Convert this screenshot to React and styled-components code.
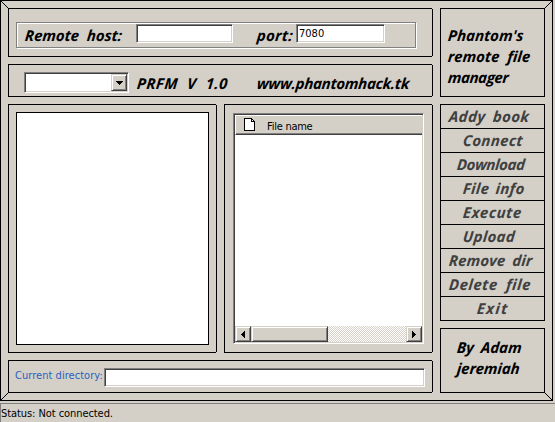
import React from 'react';
import styled, { createGlobalStyle, css } from 'styled-components';

const Global = createGlobalStyle`
  *, *::before, *::after { box-sizing: border-box; }
  body { margin: 0; background: #d4d0c8; overflow: hidden; }
`;

const sunken = css`
  border: 1px solid;
  border-color: #808080 #fff #fff #808080;
  box-shadow: inset 1px 1px #404040, inset -1px -1px #d4d0c8;
  background: #fff;
`;

const raised = css`
  border: 1px solid;
  border-color: #d4d0c8 #404040 #404040 #d4d0c8;
  box-shadow: inset 1px 1px #fff, inset -1px -1px #808080;
  background: #d4d0c8;
`;

const ui = css`
  font-family: Tahoma, 'DejaVu Sans Condensed', 'DejaVu Sans', sans-serif;
  font-stretch: condensed;
  font-size: 11px;
  line-height: 14px;
  white-space: pre;
`;

const Window = styled.div`
  width: 555px;
  height: 422px;
  display: flex;
  flex-direction: column;
  background: #d4d0c8;
`;

const Frame = styled.main`
  position: relative;
  width: 553px;
  height: 401px;
  border: 1px solid #000;
  padding: 7px;
  display: flex;
  gap: 7px;
`;

const Corners = styled.svg`
  position: absolute;
  left: -1px;
  top: -1px;
  pointer-events: none;
`;

const Left = styled.div`
  width: 425px;
  display: flex;
  flex-direction: column;
  gap: 7px;
`;

const Right = styled.aside`
  width: 105px;
  display: flex;
  flex-direction: column;
  gap: 7px;
`;

const notch = css`
  position: relative;
  &::before, &::after {
    content: '';
    position: absolute;
    right: -1px;
    width: 1px;
    height: 1px;
    background: #d4d0c8;
  }
  &::before { top: -1px; }
  &::after { bottom: -1px; }
`;

const Panel = styled.section`
  flex: none;
  width: ${(p) => (p.$w ? `${p.$w}px` : 'auto')};
  height: ${(p) => p.$h}px;
  padding: ${(p) => p.$pad || '7px'};
  border: 1px solid #000;
  ${(p) => p.$notch && notch}
`;

const Row = styled(Panel)`
  display: flex;
  align-items: flex-start;
`;

const Split = styled.div`
  display: flex;
  gap: 7px;
`;

const Etched = styled.div`
  width: 400px;
  height: 26px;
  border: 1px solid #808080;
  box-shadow: inset 1px 1px #fff, 1px 1px #fff;
  padding: 1px 0 0 8px;
  display: flex;
`;

const Script = styled.span`
  display: block;
  flex: none;
  width: ${(p) => (p.$w ? `${p.$w}px` : 'auto')};
  margin-top: ${(p) => p.$top || 0}px;
  margin-left: ${(p) => p.$x || 0}px;
  font: italic 700 15px/21px 'Comic Sans MS', 'Open Sans', sans-serif;
  letter-spacing: ${(p) => p.$ls || 0}px;
  word-spacing: ${(p) => p.$ws || 0}px;
  white-space: nowrap;
  color: ${(p) => p.$color || '#000'};
  transform: skewX(-5deg);
`;

const Field = styled.div`
  ${sunken}
  ${ui}
  flex: none;
  width: ${(p) => p.$w}px;
  height: 19px;
  padding: 2px 2px 0;
`;

const Combo = styled.div`
  ${sunken}
  width: 105px;
  height: 21px;
  padding: 1px;
  display: flex;
  justify-content: flex-end;
`;

const Button3D = styled.button`
  ${raised}
  width: ${(p) => p.$w || 16}px;
  height: ${(p) => p.$h || 16}px;
  padding: 0;
  display: flex;
  align-items: center;
  justify-content: center;
`;

const Tree = styled.div`
  width: 193px;
  height: 233px;
  border: 1px solid #000;
  background: #fff;
`;

const FileList = styled.div`
  ${sunken}
  width: 191px;
  height: 231px;
  padding: 1px;
  display: flex;
  flex-direction: column;
`;

const Header = styled.div`
  ${ui}
  height: 20px;
  padding: 2px 0 0 8px;
  display: flex;
  gap: 12px;
  background: #d4d0c8;
  border-top: 1px solid #fff;
  border-left: 1px solid #fff;
  border-bottom: 1px solid #404040;
  box-shadow: inset 0 -1px #808080;
`;

const HeaderText = styled.span`
  padding-top: 2px;
  letter-spacing: -0.25px;
`;

const Rows = styled.div`
  flex: 1;
`;

const Scroll = styled.div`
  height: 16px;
  display: flex;
  justify-content: space-between;
  background: repeating-conic-gradient(#fff 0 25%, #d4d0c8 0 50%) 0 0 / 2px 2px;
`;

const Cluster = styled.div`
  display: flex;
`;

const Label = styled.label`
  ${ui}
  width: 89px;
  margin-left: -1px;
  padding-top: 1px;
  letter-spacing: 0.04px;
  color: #2a5fc0;
`;

const Menu = styled.nav`
  height: 217px;
  border: 1px solid #000;
  display: flex;
  flex-direction: column;
`;

const MenuItem = styled.div`
  height: 24px;
  padding-top: 1px;
  flex: none;
  & + & { border-top: 1px solid #000; }
  &:first-child { height: 23px; }
`;

const Status = styled.footer`
  ${ui}
  margin-top: 2px;
  height: 19px;
  border-top: 1px solid #808080;
  border-left: 1px solid #808080;
  padding-top: 3px;
  letter-spacing: -0.07px;
`;

const Arrow = ({ d, w, h }) => (
  <svg width={w} height={h} shapeRendering="crispEdges"><path d={d} /></svg>
);

const Doc = () => (
  <svg width="11" height="13" shapeRendering="crispEdges">
    <path d="M0 0H8V1H9V2H10V3H11V13H0Z" fill="#000" />
    <path d="M1 1H7V4H10V12H1Z" fill="#fff" />
    <path d="M8 2H9V3H8Z" fill="#fff" />
  </svg>
);

const items = [
  { text: 'Addy book', x: 8, ls: 0.4, ws: 3 },
  { text: 'Connect', x: 22, ls: 0.3 },
  { text: 'Download', x: 16, ls: -0.4 },
  { text: 'File info', x: 22, ls: 0.3, ws: 2 },
  { text: 'Execute', x: 22, ls: 0.5 },
  { text: 'Upload', x: 22, ls: 0.3 },
  { text: 'Remove dir', x: 8, ls: 0.1, ws: 3 },
  { text: 'Delete file', x: 8, ls: 0.5, ws: 4 },
  { text: 'Exit', x: 36, ls: 1.2 },
];

export default function App() {
  return (
    <Window>
      <Global />
      <Frame>
        <Corners width="553" height="401" shapeRendering="crispEdges" stroke="#000">
          <path d="M0 0L9 9M553 0L544 9M0 401L9 392M553 401L544 392" />
        </Corners>
        <Left>
          <Row $notch $h={49} $pad="13px 7px 0">
            <Etched>
              <Script $w={111} $top={1} $ls={-0.05} $ws={4}>Remote host:</Script>
              <Field $w={97} />
              <Script $w={39} $x={24} $top={1} $ls={0.3}>port:</Script>
              <Field $w={89}>7080</Field>
            </Etched>
          </Row>
          <Row $notch $h={33} $pad="7px 15px 0">
            <Combo>
              <Button3D $h={17}><Arrow w={7} h={4} d="M0 0H7V1H6V2H5V3H4V4H3V3H2V2H1V1H0Z" /></Button3D>
            </Combo>
            <Script $x={8} $w={120} $top={1} $ls={0.4} $ws={5}>PRFM V 1.0</Script>
            <Script $top={1} $ls={-0.26}>www.phantomhack.tk</Script>
          </Row>
          <Split>
            <Panel $notch $w={209} $h={249}><Tree /></Panel>
            <Panel $notch $w={209} $h={249} $pad="8px">
              <FileList>
                <Header>
                  <Doc />
                  <HeaderText>File name</HeaderText>
                </Header>
                <Rows />
                <Scroll>
                  <Cluster>
                    <Button3D><Arrow w={4} h={7} d="M4 0V7H3V6H2V5H1V4H0V3H1V2H2V1H3V0Z" /></Button3D>
                    <Button3D $w={77} />
                  </Cluster>
                  <Button3D><Arrow w={4} h={7} d="M0 0V7H1V6H2V5H3V4H4V3H3V2H2V1H1V0Z" /></Button3D>
                </Scroll>
              </FileList>
            </Panel>
          </Split>
          <Row $notch $h={33} $pad="7px 7px 0">
            <Label>Current directory:</Label>
            <Field $w={321} />
          </Row>
        </Left>
        <Right>
          <Panel $h={89} $pad="16px 7px 0">
            <Script>Phantom's</Script>
            <Script $ws={4}>remote file</Script>
            <Script $ls={-0.4}>manager</Script>
          </Panel>
          <Menu>
            {items.map((it) => (
              <MenuItem key={it.text}>
                <Script $x={it.x} $ls={it.ls} $ws={it.ws} $color="#404040">{it.text}</Script>
              </MenuItem>
            ))}
          </Menu>
          <Panel $h={65} $pad="8px 16px 0">
            <Script $ws={3}>By Adam</Script>
            <Script $ls={-0.1}>jeremiah</Script>
          </Panel>
        </Right>
      </Frame>
      <Status>Status: Not connected.</Status>
    </Window>
  );
}
